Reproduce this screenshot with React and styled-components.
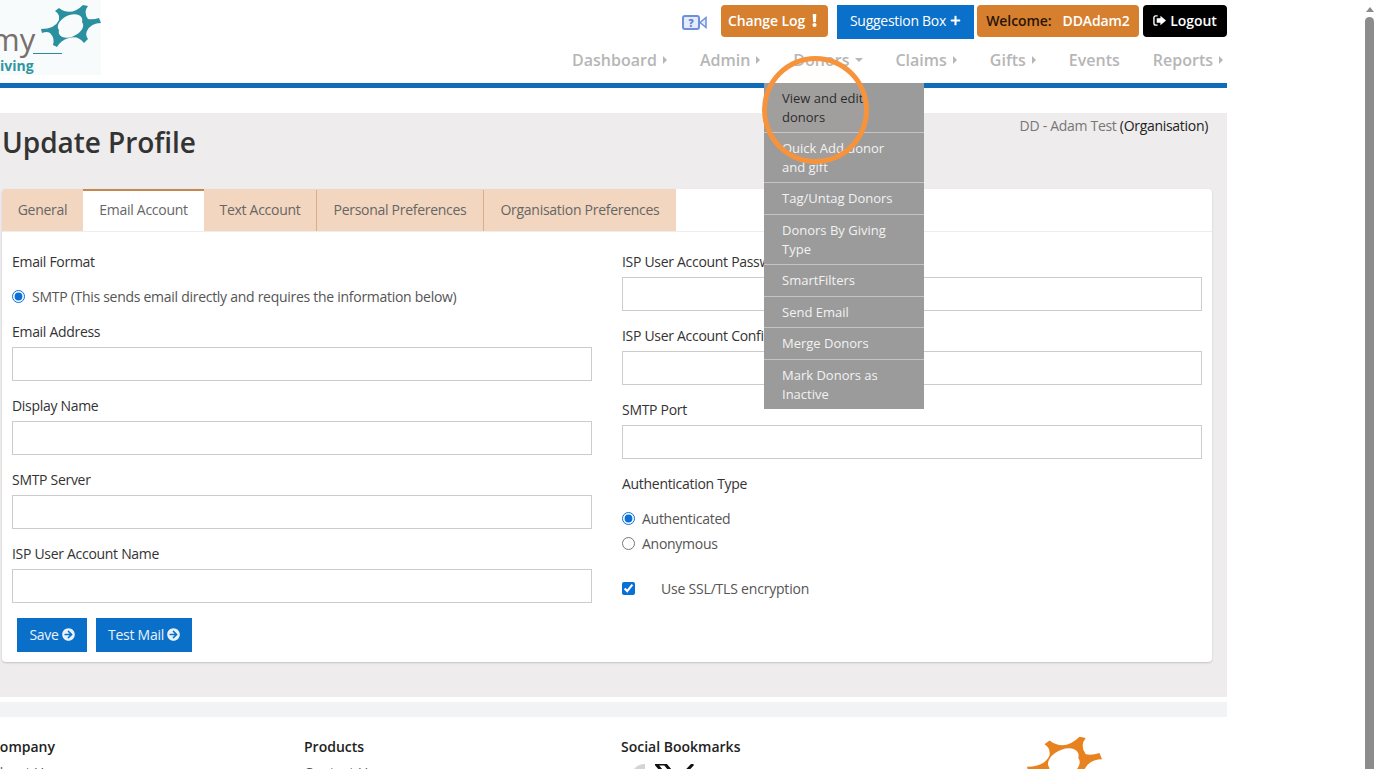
import styled, { createGlobalStyle } from "styled-components";
import { FaArrowCircleRight, FaPlus, FaExclamation } from "react-icons/fa";

const GlobalStyle = createGlobalStyle`
  html, body {
    margin: 0;
    height: 769px;
    overflow: hidden;
    background: #fff;
    font-family: "Open Sans", "Liberation Sans", sans-serif;
    font-size: 14px;
    color: #3a3a3a;
  }
  * { box-sizing: border-box; }
`;

const Screen = styled.div`
  display: flex;
  height: 769px;
  overflow: hidden;
`;

const Viewport = styled.div`
  position: relative;
  width: 1227px;
  flex: none;
  height: 769px;
`;

const Gutter = styled.div`
  margin-left: 138px;
  width: 9px;
  display: flex;
  flex-direction: column;
  align-items: center;
  padding-top: 7px;
`;

const ScrollArrow = styled.div`
  width: 0;
  height: 0;
  border-left: 4px solid transparent;
  border-right: 4px solid transparent;
  border-bottom: 5px solid #8c8c8c;
  margin-bottom: 5px;
`;

const ScrollThumb = styled.div`
  width: 9px;
  flex: 1;
  background: #8c8c8c;
  border-radius: 5px 5px 0 0;
`;

const Header = styled.header`
  height: 88px;
  display: flex;
  justify-content: space-between;
  border-bottom: 5px solid #0f6cb8;
`;

const Logo = styled.div`
  width: 101px;
  height: 75px;
  background: #f8fbfb;
  position: relative;
  overflow: hidden;
  flex: none;
`;

const LogoWord = styled.span`
  position: absolute;
  left: -9px;
  top: 20px;
  font-size: 31px;
  line-height: 38px;
  color: #77706e;
`;

const LogoRule = styled.div`
  position: absolute;
  left: 33px;
  top: 53px;
  width: 29px;
  border-top: 1px solid #2a8c9b;
`;

const LogoTag = styled.span`
  position: absolute;
  left: 0;
  top: 56px;
  font-size: 14px;
  line-height: 20px;
  font-weight: 700;
  color: #2f96a3;
`;

const StarMark = styled.svg`
  position: absolute;
  left: 41px;
  top: 2px;
`;

const HeaderRight = styled.div`
  display: flex;
  flex-direction: column;
  align-items: flex-end;
  padding-top: 5px;
`;

const Actions = styled.div`
  display: flex;
  align-items: flex-start;
`;

const VideoIcon = styled.svg`
  margin: 10px 14px 0 0;
`;

const ActionButton = styled.a`
  display: flex;
  align-items: center;
  gap: ${({ $iconGap }) => $iconGap || 4}px;
  height: ${({ $tall }) => ($tall ? "34px" : "32px")};
  width: ${({ $w }) => $w}px;
  margin-left: ${({ $gap }) => $gap || 0}px;
  padding-bottom: ${({ $tall }) => ($tall ? "3px" : "1px")};
  justify-content: center;
  background: ${({ $bg }) => $bg};
  color: #fff;
  font-weight: ${({ $tall }) => ($tall ? 400 : 600)};
  letter-spacing: ${({ $tall }) => ($tall ? "-0.28px" : "-0.1px")};
  border-radius: ${({ $tall }) => ($tall ? 0 : "4px")};
  white-space: pre;
  svg { flex: none; }
`;

const Dark = styled.span`
  color: #2a1505;
`;

const Nav = styled.nav`
  display: flex;
  gap: 33px;
  margin-top: 9px;
  padding-right: 4px;
`;

const NavItem = styled.a`
  display: flex;
  align-items: center;
  gap: 6px;
  font-size: 16px;
  line-height: 24px;
  font-weight: 600;
  color: #b6b6b6;
`;

const CaretRight = styled.i`
  width: 0;
  height: 0;
  border-top: 4px solid transparent;
  border-bottom: 4px solid transparent;
  border-left: 4px solid #b6b6b6;
`;

const CaretDown = styled.i`
  width: 0;
  height: 0;
  margin-right: -1px;
  border-left: 4px solid transparent;
  border-right: 4px solid transparent;
  border-top: 4px solid #b6b6b6;
`;

const Panel = styled.main`
  margin-top: 25px;
  height: 584px;
  background: #eeecec;
  padding: 0 15px 0 2px;
`;

const PanelHead = styled.div`
  height: 76px;
  display: flex;
  justify-content: space-between;
  align-items: flex-start;
`;

const Title = styled.h1`
  margin: 9px 0 0;
  font-size: 28px;
  line-height: 40px;
  font-weight: 600;
  letter-spacing: -0.05px;
  color: #333;
`;

const OrgLine = styled.div`
  margin: 3px 4px 0 0;
  line-height: 20px;
  letter-spacing: -0.3px;
  color: #777;
  b { font-weight: 400; color: #222; }
`;

const Card = styled.section`
  height: 473px;
  background: #fff;
  border-radius: 4px;
  box-shadow: 0 1px 2px rgba(0, 0, 0, 0.18);
  overflow: hidden;
`;

const Tabs = styled.div`
  display: flex;
  height: 43px;
  border-bottom: 1px solid #eee;
`;

const Tab = styled.a`
  width: ${({ $w }) => $w}px;
  height: 42px;
  padding-bottom: 3px;
  display: flex;
  align-items: center;
  justify-content: center;
  letter-spacing: -0.28px;
  color: #666;
  background: ${({ $active }) => ($active ? "#fff" : "#f3d6bf")};
  border-top: 2px solid ${({ $active }) => ($active ? "#c5894f" : "#f3d6bf")};
  border-right: ${({ $edge }) => ($edge ? "1px solid #dcae88" : "none")};
`;

const FormGrid = styled.div`
  display: grid;
  grid-template-columns: 580px 580px;
  gap: 30px;
  padding: 20px 10px 0;
`;

const Column = styled.div`
  display: flex;
  flex-direction: column;
`;

const Label = styled.label`
  display: block;
  line-height: 19px;
  padding-bottom: 2px;
  letter-spacing: -0.3px;
  color: #333;
  margin-bottom: ${({ $mb }) => $mb || 0}px;
`;

const Field = styled.div`
  margin-bottom: 15px;
`;

const TextInput = styled.input`
  display: block;
  width: 100%;
  height: 34px;
  margin-top: 4px;
  border: 1px solid #ccc;
  background: #fff;
`;

const OptionRow = styled.label`
  display: flex;
  align-items: center;
  height: 21px;
  letter-spacing: -0.28px;
  color: #555;
  margin-bottom: ${({ $mb }) => $mb || 0}px;
  input {
    width: 13px;
    height: 13px;
    margin: 0 7px 0 0;
    accent-color: #0a6fd6;
    flex: none;
  }
`;

const CheckRow = styled(OptionRow)`
  margin-top: 24px;
  letter-spacing: -0.2px;
  input { margin-right: 26px; }
`;

const FormActions = styled.div`
  display: flex;
  gap: 9px;
  padding: 0 15px;
`;

const SubmitButton = styled.a`
  height: 34px;
  width: ${({ $w }) => $w}px;
  padding-bottom: 2px;
  display: flex;
  align-items: center;
  justify-content: center;
  gap: 3px;
  letter-spacing: -0.28px;
  background: #0a6fc9;
  color: #e8f3fc;
`;

const Band = styled.div`
  margin-top: 5px;
  height: 15px;
  background: #f2f3f4;
`;

const Footer = styled.footer`
  display: grid;
  grid-template-columns: 313px 317px 406px 80px;
  margin-left: -9px;
  padding-top: 21px;
`;

const FooterHead = styled.h4`
  margin: 0 0 8px;
  font-size: 14px;
  line-height: 18px;
  font-weight: 600;
  color: #222;
`;

const FooterLink = styled.a`
  display: block;
  color: #555;
  line-height: 18px;
`;

const Socials = styled.div`
  display: flex;
  align-items: flex-start;
  gap: 10px;
  padding-left: 9px;
`;

const SocialDot = styled.span`
  width: 15px;
  height: 24px;
  border-radius: 15px 0 0 0;
  background: #d4d4d4;
`;

const FooterMark = styled.svg`
  margin-top: -5px;
  display: block;
`;

const DropMenu = styled.div`
  position: absolute;
  left: 764px;
  top: 83px;
  width: 160px;
  background: #9b9b9b;
  z-index: 5;
`;

const DropItem = styled.a`
  display: block;
  padding: 6px 18px;
  font-size: 13px;
  line-height: 18.6px;
  color: ${({ $hover }) => ($hover ? "#1d1d1d" : "#f2f2f2")};
  & + & { border-top: 1px solid #c4c4c4; }
`;

const Highlight = styled.div`
  position: absolute;
  left: 762px;
  top: 56px;
  width: 107px;
  height: 108px;
  border: 5px solid #f7933b;
  border-radius: 50%;
  background: rgba(255, 240, 225, 0.06);
  z-index: 6;
`;

const STAR =
  "M14 9L18 6Q30 15 42 3L47 4Q42 10 47 17Q52 18 58 16L60 21Q50 21 46 29Q44 33 47 37L43 41Q37 33 28 36Q20 38 16 45L12 43Q14 36 9 31Q6 29 1 31L0 27Q14 27 18 18Q19 12 14 9ZM18 28A13 8 -25 1 0 41 20A13 8 -25 1 0 18 28Z";

const Star = ({ as: Comp, size, color, ...rest }) => (
  <Comp width={size} height={(size * 46) / 60} viewBox="0 0 60 46" {...rest}>
    <path d={STAR} fill={color} fillRule="evenodd" />
  </Comp>
);

const LogoutGlyph = () => (
  <svg width="13" height="13" viewBox="0 0 14 14" fill="none">
    <path d="M5 2H3a2 2 0 0 0-2 2v6a2 2 0 0 0 2 2h2" stroke="#fff" strokeWidth="1.5" />
    <path d="M8 2l6 5-6 5V9.5H4v-5h4z" fill="#fff" />
  </svg>
);

const navItems = [
  ["Dashboard", "right"],
  ["Admin", "right"],
  ["Donors", "down"],
  ["Claims", "right"],
  ["Gifts", "right"],
  ["Events", null],
  ["Reports", "right"],
];

const tabs = [
  ["General", 81, false, false],
  ["Email Account", 121, true, false],
  ["Text Account", 113, false, true],
  ["Personal Preferences", 167, false, true],
  ["Organisation Preferences", 192, false, false],
];

const menuItems = [
  "View and edit donors",
  "Quick Add donor and gift",
  "Tag/Untag Donors",
  "Donors By Giving Type",
  "SmartFilters",
  "Send Email",
  "Merge Donors",
  "Mark Donors as Inactive",
];

const leftFields = ["Email Address", "Display Name", "SMTP Server", "ISP User Account Name"];
const rightFields = ["ISP User Account Password", "ISP User Account Confirm Password", "SMTP Port"];

const App = () => {
  return (
    <Screen>
      <GlobalStyle />
      <Viewport>
        <Header>
          <Logo>
            <LogoWord>my</LogoWord>
            <LogoRule />
            <LogoTag>iving</LogoTag>
            <Star as={StarMark} size={60} color="#2a8f9e" />
          </Logo>
          <HeaderRight>
            <Actions>
              <VideoIcon width="25" height="15" viewBox="0 0 25 15" fill="none">
                <rect x="1" y="1" width="16" height="13" rx="2" fill="#e4ebfb" stroke="#6d8fdc" strokeWidth="2" />
                <text x="9" y="11.5" textAnchor="middle" fontSize="10" fontWeight="800" fill="#5a7fd6" fontFamily="Open Sans">?</text>
                <path d="M18 7.5L24 2.5v10z" fill="#e4ebfb" stroke="#6d8fdc" strokeWidth="1.5" />
              </VideoIcon>
              <ActionButton $w={107} $iconGap={3} $bg="#d67f2e">
                Change Log<FaExclamation size={13} />
              </ActionButton>
              <ActionButton $w={137} $gap={9} $bg="#0a70c9" $tall>
                Suggestion Box<FaPlus size={11} />
              </ActionButton>
              <ActionButton $w={162} $gap={3} $bg="#d67f2e">
                <Dark>Welcome:</Dark>  DDAdam2
              </ActionButton>
              <ActionButton $w={84} $gap={4} $bg="#000">
                <LogoutGlyph />Logout
              </ActionButton>
            </Actions>
            <Nav>
              {navItems.map(([name, caret]) => (
                <NavItem key={name}>
                  {name}
                  {caret === "right" && <CaretRight />}
                  {caret === "down" && <CaretDown />}
                </NavItem>
              ))}
            </Nav>
          </HeaderRight>
        </Header>

        <Panel>
          <PanelHead>
            <Title>Update Profile</Title>
            <OrgLine>
              DD - Adam Test <b>(Organisation)</b>
            </OrgLine>
          </PanelHead>
          <Card>
            <Tabs>
              {tabs.map(([name, w, active, edge]) => (
                <Tab key={name} $w={w} $active={active} $edge={edge}>
                  {name}
                </Tab>
              ))}
            </Tabs>
            <FormGrid>
              <Column>
                <Label $mb={13}>Email Format</Label>
                <OptionRow $mb={15}>
                  <input type="radio" name="format" defaultChecked />
                  SMTP (This sends email directly and requires the information below)
                </OptionRow>
                {leftFields.map((name) => (
                  <Field key={name}>
                    <Label>{name}</Label>
                    <TextInput type="text" />
                  </Field>
                ))}
              </Column>
              <Column>
                {rightFields.map((name) => (
                  <Field key={name}>
                    <Label>{name}</Label>
                    <TextInput type="text" />
                  </Field>
                ))}
                <Label $mb={13}>Authentication Type</Label>
                <OptionRow $mb={4}>
                  <input type="radio" name="auth" defaultChecked />
                  Authenticated
                </OptionRow>
                <OptionRow>
                  <input type="radio" name="auth" />
                  Anonymous
                </OptionRow>
                <CheckRow>
                  <input type="checkbox" defaultChecked />
                  Use SSL/TLS encryption
                </CheckRow>
              </Column>
            </FormGrid>
            <FormActions>
              <SubmitButton $w={70}>
                Save <FaArrowCircleRight size={13} />
              </SubmitButton>
              <SubmitButton $w={96}>
                Test Mail <FaArrowCircleRight size={13} />
              </SubmitButton>
            </FormActions>
          </Card>
        </Panel>

        <Band />

        <Footer>
          <div>
            <FooterHead>Company</FooterHead>
            <FooterLink>About Us</FooterLink>
          </div>
          <div>
            <FooterHead>Products</FooterHead>
            <FooterLink>Contact Us</FooterLink>
          </div>
          <div>
            <FooterHead>Social Bookmarks</FooterHead>
            <Socials>
              <SocialDot />
              <svg width="42" height="30" viewBox="0 0 42 30">
                <path d="M1 0h9l25 30h-9zM38 0L24 15" stroke="#111" strokeWidth="3" fill="none" />
              </svg>
            </Socials>
          </div>
          <Star as={FooterMark} size={75} color="#e8821f" />
        </Footer>

        <DropMenu>
          {menuItems.map((name, i) => (
            <DropItem key={name} $hover={i === 0}>
              {name}
            </DropItem>
          ))}
        </DropMenu>
        <Highlight />
      </Viewport>
      <Gutter>
        <ScrollArrow />
        <ScrollThumb />
      </Gutter>
    </Screen>
  );
};

export default App;
